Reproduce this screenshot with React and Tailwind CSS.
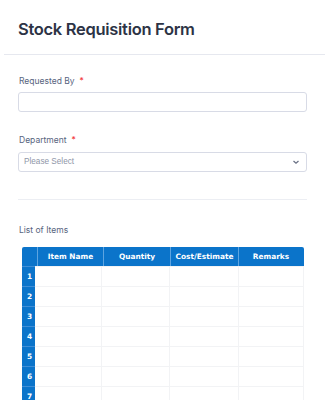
import React from "react";

const cols = ["Item Name", "Quantity", "Cost/Estimate", "Remarks"];
const widths = ["w-[66px]", "w-[67px]", "w-[68px]", "w-[64px]"];

export default function App() {
  return (
    <div className="w-[325px] h-[400px] overflow-hidden bg-white" style={{ fontFamily: "Inter, 'Liberation Sans', sans-serif" }}>
      <div className="ml-[4px] border-b border-[#e6e8ef] pl-[14px] pt-[19px] h-[55px]">
        <h1 className="text-[16.5px] leading-[20px] font-semibold tracking-[-0.3px] text-[#2c3345]">Stock Requisition Form</h1>
      </div>
      <div className="px-[18px]">
        <div className="pt-[20px]">
          <div className="pl-[1px] text-[8.5px] leading-[13px] text-[#57647e]">
            Requested By<span className="ml-[5px] text-[#f23a3c]">*</span>
          </div>
          <div className="mt-[4px] h-[20px] rounded-[3px] border border-[#d8dbe6] bg-white" />
        </div>
        <div className="pt-[22px]">
          <div className="pl-[1px] text-[8.5px] leading-[13px] text-[#57647e]">
            Department<span className="ml-[5px] text-[#f23a3c]">*</span>
          </div>
          <div className="mt-[5px] h-[20px] rounded-[3px] border border-[#d8dbe6] bg-white flex items-center justify-between pl-[5px] pr-[6px]">
            <span className="text-[8.2px] text-[#8f96a8]" style={{ fontFamily: "Arial, 'Liberation Sans', sans-serif" }}>Please Select</span>
            <svg width="8" height="6" viewBox="0 0 8 6" fill="none">
              <path d="M1.5 2 L4 4.2 L6.5 2" stroke="#6a7185" strokeWidth="1.3" />
            </svg>
          </div>
        </div>
        <div className="mt-[27px] border-t border-[#eceef3]" />
        <div className="pt-[24px] pl-[1px] text-[8.5px] leading-[13px] text-[#57647e]">List of Items</div>
        <div className="mt-[10px] ml-[4px] w-[282px]" style={{ fontFamily: "Verdana, 'DejaVu Sans', sans-serif" }}>
          <div className="flex h-[19px] bg-[#0b74ca] rounded-t-[2px]">
            <div className="w-[16px] border-r border-[#5ea4e0]" />
            {cols.map((c, i) => (
              <div key={c} className={`${widths[i]} ${i < 3 ? "border-r border-[#5ea4e0]" : ""} flex items-center justify-center text-[7.4px] font-bold text-white`}>
                {c}
              </div>
            ))}
          </div>
          {[1, 2, 3, 4, 5, 6, 7].map((n) => (
            <div key={n} className="flex h-[20px]">
              <div className="w-[16px] bg-[#0b74ca] border-t border-[#3f8ed6] flex items-center pl-[5px] text-[7.4px] font-bold text-white">{n}</div>
              {cols.map((c, i) => (
                <div key={c} className="border-t border-r border-[#f2f3f5]">
                  <div className={widths[i]} />
                </div>
              ))}
            </div>
          ))}
        </div>
      </div>
    </div>
  );
}
